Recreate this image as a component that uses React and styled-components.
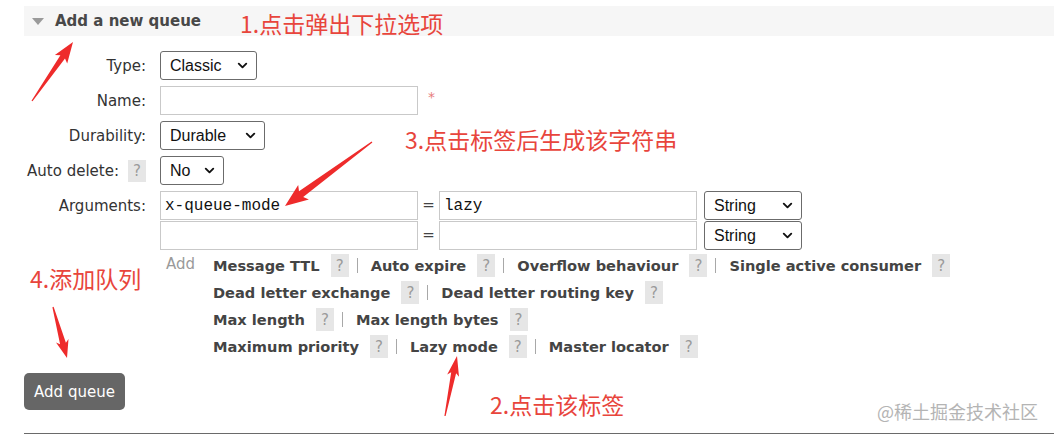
import React from 'react';
import styled, { createGlobalStyle } from 'styled-components';
import { ChevronDown } from 'lucide-react';

const GlobalStyle = createGlobalStyle`
  html, body {
    margin: 0;
    background: #fff;
  }
  body {
    font-family: "DejaVu Sans", Verdana, sans-serif;
    font-size: 15px;
    color: #444;
  }
`;

const Page = styled.div`
  position: relative;
  width: 1054px;
  height: 435px;
  overflow: hidden;
  box-sizing: border-box;
  padding: 6px 0 0 24px;
`;

const Header = styled.div`
  display: flex;
  align-items: center;
  height: 30px;
  padding-left: 8px;
  background: #f6f6f6;
  font-weight: bold;
  color: #484848;
`;

const Triangle = styled.span`
  width: 0;
  height: 0;
  margin-right: 11px;
  border-left: 6.5px solid transparent;
  border-right: 6.5px solid transparent;
  border-top: 7px solid #9a9a9a;
`;

const FormGrid = styled.div`
  display: grid;
  grid-template-columns: 122px auto;
  column-gap: 14px;
  row-gap: 6px;
  margin-top: 15px;
  align-items: center;
`;

const Label = styled.div`
  display: flex;
  justify-content: flex-end;
  align-items: center;
  gap: 9px;
  color: #333;
  align-self: ${(p) => (p.top ? 'start' : 'center')};
  height: 29px;
`;

const Field = styled.div`
  display: flex;
  align-items: center;
`;

const SelectBox = styled.div`
  box-sizing: border-box;
  display: flex;
  align-items: center;
  justify-content: space-between;
  width: ${(p) => p.w}px;
  height: 29px;
  padding: 0 6px 0 9px;
  border: 1px solid #6b6b6b;
  border-radius: 3px;
  background: #fff;
  font-family: "Liberation Sans", Arial, sans-serif;
  font-size: 16px;
  color: #111;
`;

const TextInput = styled.div`
  box-sizing: border-box;
  display: flex;
  align-items: center;
  width: 258px;
  height: 29px;
  padding: 0 4px;
  border: 1px solid #c9c9c9;
  background: #fff;
  font-family: "Liberation Mono", "Courier New", monospace;
  font-size: 16px;
  color: #111;
`;

const Required = styled.span`
  margin-left: 10px;
  margin-top: -8px;
  color: #e77b7b;
  font-size: 14px;
`;

const Help = styled.span`
  display: inline-flex;
  align-items: center;
  justify-content: center;
  width: 18px;
  height: ${(p) => (p.tall ? 23 : 22)}px;
  background: #e6e6e6;
  color: #9a9a9a;
  font-weight: normal;
  font-size: 15px;
`;

const ArgsBlock = styled.div`
  display: flex;
  flex-direction: column;
  gap: 1px;
`;

const ArgRow = styled.div`
  display: flex;
  align-items: flex-start;
`;

const Equals = styled.span`
  width: 21px;
  line-height: 28px;
  text-align: center;
  color: #444;
`;

const TypeSelect = styled.div`
  margin-left: 7px;
`;

const AddArea = styled.div`
  display: flex;
  margin-top: 2px;
`;

const AddWord = styled.span`
  width: 53px;
  padding-left: 6px;
  box-sizing: border-box;
  line-height: 25px;
  color: #9a9a9a;
`;

const LinkLines = styled.div`
  display: flex;
  flex-direction: column;
`;

const LinkLine = styled.div`
  display: flex;
  align-items: center;
  height: 27px;
`;

const LinkText = styled.span`
  font-weight: bold;
  font-size: 14.6px;
  color: #444;
  margin-right: 11px;
`;

const Sep = styled.span`
  width: 1px;
  height: 15px;
  background: #a8a8a8;
  margin: 0 13px 0 8px;
`;

const Button = styled.button`
  display: block;
  margin-top: 13px;
  width: 101px;
  height: 37px;
  border: none;
  border-radius: 5px;
  background: #666;
  color: #fff;
  font-family: "DejaVu Sans", Verdana, sans-serif;
  font-size: 15px;
  padding: 0;
`;

const Rule = styled.div`
  margin-top: 23px;
  height: 1px;
  background: #6a6a6a;
`;

const Note = styled.span`
  position: absolute;
  left: ${(p) => p.x}px;
  top: ${(p) => p.y}px;
  font-family: "Noto Sans CJK SC", sans-serif;
  font-size: 23px;
  line-height: 23px;
  color: #e8453c;
  white-space: nowrap;
`;

const Watermark = styled.span`
  position: absolute;
  left: 877px;
  top: 401px;
  font-family: "Noto Sans CJK SC", sans-serif;
  font-size: 18px;
  line-height: 20px;
  color: #b4b4b4;
  white-space: nowrap;
`;

const Overlay = styled.svg`
  position: absolute;
  left: 0;
  top: 0;
  pointer-events: none;
`;

const Select = ({ value, w }) => (
  <SelectBox w={w}>
    <span>{value}</span>
    <ChevronDown size={15} strokeWidth={3} color="#111" />
  </SelectBox>
);

const linkGroups = [
  ['Message TTL', 'Auto expire', 'Overflow behaviour', 'Single active consumer'],
  ['Dead letter exchange', 'Dead letter routing key'],
  ['Max length', 'Max length bytes'],
  ['Maximum priority', 'Lazy mode', 'Master locator'],
];

const arrowPoints = (x1, y1, x2, y2, head, hw, sw) => {
  const dx = x2 - x1;
  const dy = y2 - y1;
  const len = Math.hypot(dx, dy);
  const ux = dx / len;
  const uy = dy / len;
  const nx = -uy;
  const ny = ux;
  const bx = x2 - ux * head;
  const by = y2 - uy * head;
  const pts = [
    [x1 + nx * 0.6, y1 + ny * 0.6],
    [bx + nx * sw, by + ny * sw],
    [bx - ux * 3 + nx * hw, by - uy * 3 + ny * hw],
    [x2, y2],
    [bx - ux * 3 - nx * hw, by - uy * 3 - ny * hw],
    [bx - nx * sw, by - ny * sw],
    [x1 - nx * 0.6, y1 - ny * 0.6],
  ];
  return pts.map((p) => p.map((v) => v.toFixed(1)).join(',')).join(' ');
};

const arrows = [
  [32, 101, 73, 42, 18, 7.5, 2.8],
  [372, 142, 285, 206, 20, 9, 3.5],
  [53, 307, 67, 358, 15, 6.5, 3],
  [445, 416, 457, 356, 17, 6, 2.5],
];

export default function App() {
  return (
    <>
      <GlobalStyle />
      <Page>
        <Header>
          <Triangle />
          Add a new queue
        </Header>

        <FormGrid>
          <Label>Type:</Label>
          <Field>
            <Select value="Classic" w={97} />
          </Field>

          <Label>Name:</Label>
          <Field>
            <TextInput />
            <Required>*</Required>
          </Field>

          <Label>Durability:</Label>
          <Field>
            <Select value="Durable" w={105} />
          </Field>

          <Label>
            Auto delete:
            <Help>?</Help>
          </Label>
          <Field>
            <Select value="No" w={64} />
          </Field>

          <Label top>Arguments:</Label>
          <div>
            <ArgsBlock>
              <ArgRow>
                <TextInput>x-queue-mode</TextInput>
                <Equals>=</Equals>
                <TextInput>lazy</TextInput>
                <TypeSelect>
                  <Select value="String" w={98} />
                </TypeSelect>
              </ArgRow>
              <ArgRow>
                <TextInput />
                <Equals>=</Equals>
                <TextInput />
                <TypeSelect>
                  <Select value="String" w={98} />
                </TypeSelect>
              </ArgRow>
            </ArgsBlock>
            <AddArea>
              <AddWord>Add</AddWord>
              <LinkLines>
                {linkGroups.map((group, gi) => (
                  <LinkLine key={gi}>
                    {group.map((name, i) => (
                      <React.Fragment key={name}>
                        {i > 0 && <Sep />}
                        <LinkText>{name}</LinkText>
                        <Help tall>?</Help>
                      </React.Fragment>
                    ))}
                  </LinkLine>
                ))}
              </LinkLines>
            </AddArea>
          </div>
        </FormGrid>

        <Button>Add queue</Button>
        <Rule />

        <Overlay width="1054" height="435" viewBox="0 0 1054 435">
          {arrows.map((a, i) => (
            <polygon key={i} points={arrowPoints(...a)} fill="#ee2b2b" />
          ))}
        </Overlay>

        <Note x={240} y={12}>1.点击弹出下拉选项</Note>
        <Note x={405} y={128}>3.点击标签后生成该字符串</Note>
        <Note x={30} y={267}>4.添加队列</Note>
        <Note x={490} y={393}>2.点击该标签</Note>
        <Watermark>@稀土掘金技术社区</Watermark>
      </Page>
    </>
  );
}
